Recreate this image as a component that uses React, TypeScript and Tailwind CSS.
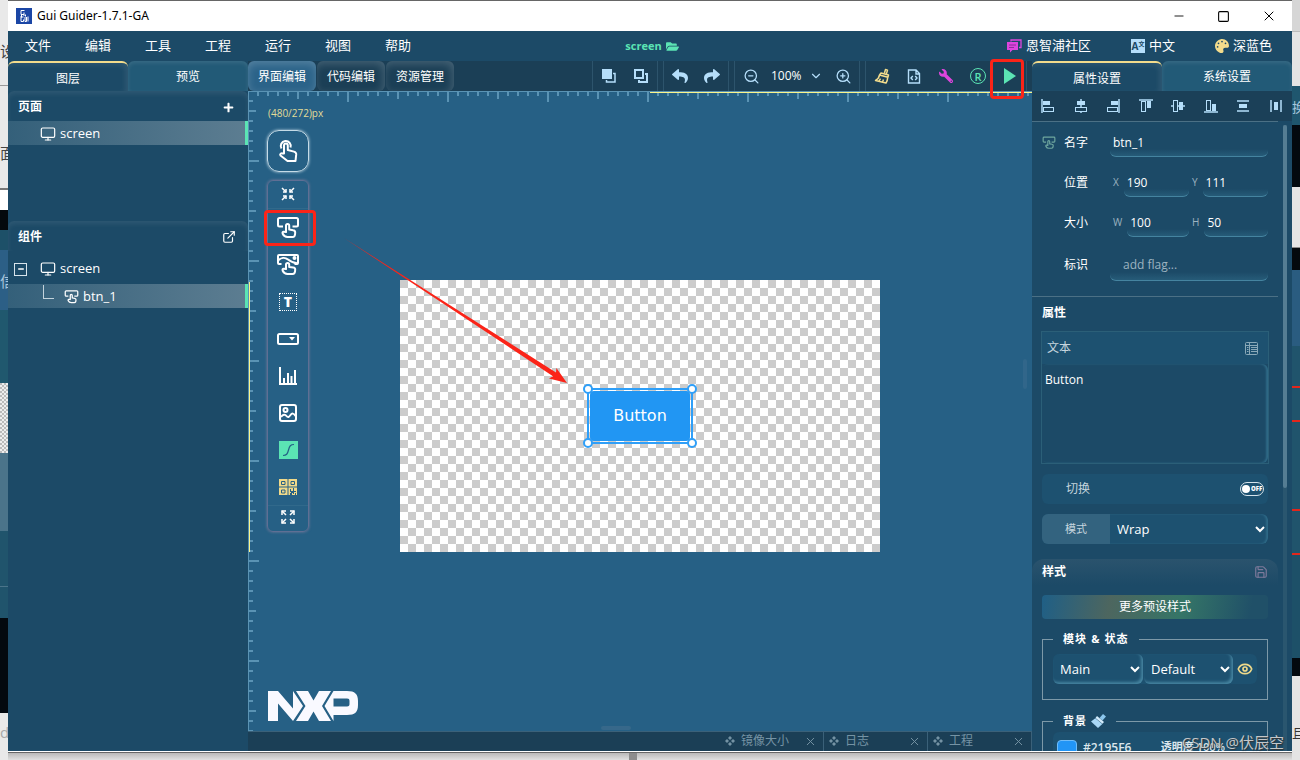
import React from "react";
import {
  FaFolderOpen,
  FaPalette,
  FaPlus,
  FaReply,
  FaShare,
  FaWrench,
} from "react-icons/fa";
import {
  ChevronDown,
  ExternalLink,
  Eye,
  Minus,
  Monitor,
  Save,
  Square,
  X,
  ZoomIn,
  ZoomOut,
} from "lucide-react";

const menuItems = ["文件", "编辑", "工具", "工程", "运行", "视图", "帮助"];
const editorTabs = ["界面编辑", "代码编辑", "资源管理"];
const dockTabs = ["镜像大小", "日志", "工程"];

type IconProps = { className?: string };

/* ---------- icons ---------- */

const AppIcon: React.FC = () => (
  <svg viewBox="0 0 16 16" className="w-4 h-4">
    <rect width="16" height="16" fill="#1b46a5" />
    <path
      d="M8.5 2.5H5v4h3M8 4.5v3.5M4.5 8.5l1 .8M5.5 7v2M7.5 9H5v4.5h2.5v-2M9 9v4.5h1.5V9M9.5 6.5v2M12 8.5v5"
      fill="none"
      stroke="#fff"
    />
  </svg>
);

const TouchIcon: React.FC<IconProps> = ({ className }) => (
  <svg viewBox="0 0 24 24" className={className} fill="none" stroke="currentColor" strokeWidth="2" strokeLinejoin="round">
    <path d="M5.500 9.500a5 5 0 1 1 9-1" />
    <path d="M8 14.500V6.500a1.900 1.900 0 0 1 3.800 0V11l6.200 1.600c1.500.4 2.300 1.300 2.200 2.800l-.7 6.600H11.500l-7-5.500c-1-1.200.8-2.800 2-2z" />
  </svg>
);

const ButtonWidgetIcon: React.FC<IconProps> = ({ className }) => (
  <svg viewBox="0 0 24 22" className={className} fill="none" stroke="currentColor" strokeWidth="2" strokeLinejoin="round">
    <path d="M7 9.500H3.500A1.500 1.500 0 0 1 2 8V2.500A1.500 1.500 0 0 1 3.500 1h17A1.500 1.500 0 0 1 22 2.500V8a1.500 1.500 0 0 1-1.500 1.500H16.500" />
    <path d="M10 15V8.500a1.600 1.600 0 0 1 3.200 0V12.500l4 .7c1.400.2 2 1 2 2.200 0 3-.8 4.600-2.700 4.600H11.500c-2.200 0-4-1.600-4.800-3.200-.5-1.200 0-2.200 1.100-2.100z" />
  </svg>
);

const ImageButtonIcon: React.FC<IconProps> = ({ className }) => (
  <svg viewBox="0 0 24 22" className={className} fill="none" stroke="currentColor" strokeWidth="2" strokeLinejoin="round">
    <path d="M5.500 10H3a1 1 0 0 1-1-1V2a1 1 0 0 1 1-1h18a1 1 0 0 1 1 1v7a1 1 0 0 1-1 1h-2.500" />
    <path d="M2 6.500c3-3 7-3.500 10-1s6 3.500 10 4" />
    <circle cx="18.500" cy="4" r="1" />
    <path d="M10 15v-4.500a1.600 1.600 0 0 1 3.200 0v2.500l4 .5c1.400.2 2 .9 2 2 0 3-.8 4.500-2.700 4.500H11.500c-2.200 0-4-1.600-4.800-3.200-.5-1.200 0-2.200 1.100-2.100z" />
  </svg>
);

const LabelIcon: React.FC = () => (
  <span className="flex items-center justify-center w-[18px] h-[18px] border border-dotted border-white text-sm font-extrabold leading-none text-white">
    T
  </span>
);

const DropdownIcon: React.FC = () => (
  <svg viewBox="0 0 22 12" className="w-[22px] h-3">
    <rect x="1" y="1" width="20" height="10" rx="1.500" fill="none" stroke="#fff" strokeWidth="2" />
    <path d="M12 4h6l-3 3.500z" fill="#fff" />
  </svg>
);

const ChartIcon: React.FC = () => (
  <svg viewBox="0 0 18 18" className="w-[18px] h-[18px]" fill="none" stroke="#fff" strokeWidth="2">
    <path d="M1 0v17h17" />
    <path d="M5 17v-6M9 17V6M12.500 17V9M16 17V3" />
  </svg>
);

const PictureIcon: React.FC = () => (
  <svg viewBox="0 0 18 18" className="w-[18px] h-[18px]" fill="none" stroke="#fff" strokeWidth="2">
    <rect x="1" y="1" width="16" height="16" rx="2" />
    <circle cx="6.500" cy="6" r="2" />
    <path d="M2 13c2-2.500 4-3 5.500-1s2.500 1 4-1 3-2 5 1" />
  </svg>
);

const CurveIcon: React.FC = () => (
  <svg viewBox="0 0 19 18" className="w-[19px] h-[18px]">
    <rect width="19" height="18" fill="#5be4b4" />
    <path d="M4 14.500c3.500 0 4.500-1.500 5.500-5.500s2-5.500 5.500-5.500" fill="none" stroke="#266085" strokeWidth="1.200" />
  </svg>
);

const QrIcon: React.FC = () => (
  <svg viewBox="0 0 18 18" className="w-[18px] h-[18px]">
    <path d="M0 1h8.500v7.500H0zM9.500 1H18v7.500H9.500zM0 9.500h8.500V17H0zM9.500 9.500H18V17H9.500z" fill="#efd98a" />
    <path d="M2.500 3.500h3.500v3H2.500zM12 3.500h3.500v3H12zM2.500 12h3.500v3H2.500z" fill="none" stroke="#266085" />
    <path d="M11 11h1v2h2v-3h1v3h2v1h-2v2h-1v-1h-1v2h-2v-2h1v-1h-1zM16 15h1v2h-1z" fill="#266085" />
  </svg>
);

const CollapseIcon: React.FC = () => (
  <svg viewBox="0 0 14 14" className="w-3.5 h-3.5" fill="none" stroke="#fff" strokeWidth="1.500">
    <path d="M1 1l4 4M13 1L9 5M1 13l4-4M13 13L9 9" />
    <path d="M2 5h3V2M12 5H9V2M2 9h3v3M12 9H9v3" />
  </svg>
);

const ExpandIcon: React.FC = () => (
  <svg viewBox="0 0 14 14" className="w-3.5 h-3.5" fill="none" stroke="#fff" strokeWidth="1.500">
    <path d="M1 1l4 4M13 1L9 5M1 13l4-4M13 13L9 9" />
    <path d="M1 5V1h4M9 1h4v4M1 9v4h4M13 9v4H9" />
  </svg>
);

const BringFrontIcon: React.FC = () => (
  <svg viewBox="0 0 14 14" className="w-3.5 h-3.5">
    <rect width="10" height="10" fill="#b5defa" />
    <path d="M11 4.500h2V13H4.500v-2" fill="none" stroke="#b5defa" strokeWidth="1.500" />
  </svg>
);

const SendBackIcon: React.FC = () => (
  <svg viewBox="0 0 14 14" className="w-3.5 h-3.5" fill="none" stroke="#b5defa" strokeWidth="2">
    <rect x="1" y="1" width="8" height="8" />
    <path d="M11 5h2v8H5v-2" />
  </svg>
);

const BroomIcon: React.FC = () => (
  <svg viewBox="0 0 16 16" className="w-4 h-4" fill="none" stroke="#f3dc8c" strokeWidth="1.500" strokeLinejoin="round">
    <path d="M10.500 5l1-3.500 2 .6-1 3.500M7 5l7.500 2-.6 2.200L5.500 7zM5.500 7.200C5 10 3.500 11.500 1.500 12.500l10.500 2.500c1-1.500 1.600-3.500 1.700-5.600M5 13.200l1.500-2.500M8.500 14l1-2.500" />
  </svg>
);

const CodeFileIcon: React.FC = () => (
  <svg viewBox="0 0 14 15" className="w-3.5 h-[15px]" fill="none" stroke="#b5defa" strokeWidth="1.400">
    <path d="M1.500 1H9l3.500 3.500V14h-11zM9 1v4h3.500" />
    <path d="M5.800 7L4 9l1.800 2M8.200 7L10 9l-1.800 2" />
  </svg>
);

const RegisteredIcon: React.FC = () => (
  <span className="flex items-center justify-center w-4 h-4 border border-[#5be4b4] rounded-full text-[11px] font-semibold leading-none text-[#5be4b4]">
    R
  </span>
);

const ChatIcon: React.FC = () => (
  <svg viewBox="0 0 16 14" className="w-4 h-3.5">
    <path d="M5 2.500V1h10v7.500h-2" fill="none" stroke="#dd45dd" strokeWidth="1.300" />
    <path d="M1 3h11v8H6.500L4 13.500V11H1z" fill="#dd45dd" />
    <path d="M3 6h7M3 8.500h5" stroke="#8a2f9a" />
  </svg>
);

const LanguageIcon: React.FC = () => (
  <span className="flex items-center justify-center w-3.5 h-3.5 bg-[#b5defa] text-[10px] font-bold leading-none text-[#1c4a67]">
    A<span className="text-[6px] -mt-1">文</span>
  </span>
);

const BrushIcon: React.FC = () => (
  <svg viewBox="0 0 15 14" className="w-[15px] h-3.5">
    <path d="M12 0l3 2.500-3.500 4L8.500 4z" fill="#8cc6ec" />
    <path d="M6 2l7 6-1.500 1.800L4.500 4z" fill="#d3ecfc" />
    <path d="M4.300 4.200l7 5.800L7 14 0 7.500z" fill="#a9d8f7" />
  </svg>
);

const TableIcon: React.FC = () => (
  <svg viewBox="0 0 13 13" className="w-[13px] h-[13px]" fill="none" stroke="#8aa9b8">
    <rect x=".5" y=".5" width="12" height="12" rx="1" />
    <path d="M1 3.500h11M4.500 1v11M6 5.500h6M6 7.500h6M6 9.500h6M2 5.500h1.500M2 7.500h1.500M2 9.500h1.500" />
  </svg>
);

const DiamondsIcon: React.FC = () => (
  <svg viewBox="0 0 10 10" className="w-2.5 h-2.5" fill="currentColor">
    <path d="M5 0l2 2-2 2-2-2zM5 6l2 2-2 2-2-2zM2 3l2 2-2 2-2-2zM8 3l2 2-2 2-2-2z" />
  </svg>
);

const NxpLogo: React.FC = () => (
  <svg viewBox="0 0 90 30" className="w-[90px] h-[30px]" fill="#f9f9ff">
    <path d="M0 0h10l15 17.500V0l10 15-10 15L10 12.500V30H0z" />
    <path d="M28 0h12l5.500 9.500L51 0h12L54 15l9 15H51l-5.500-9.500L40 30H28l9.500-15z" />
    <path fillRule="evenodd" d="M65.500 0H79c8 0 11 3 11 10v4c0 7-3 10-11 10H65.500v6L56.500 15zM65.500 7.500v8H79c2 0 2.500-1 2.500-2.500v-3c0-1.700-.6-2.500-2.500-2.500z" />
  </svg>
);

/* each glyph is a guide line plus a filled and a hollow bar */
const alignIcons = [
  { name: "左对齐", d: "M1 0v14", solid: [2, 2, 7, 4], open: [2.5, 8.5, 10, 4] },
  { name: "水平居中", d: "M7 0v14", solid: [3, 2, 8, 4], open: [1.5, 8.5, 11, 4] },
  { name: "右对齐", d: "M13 0v14", solid: [5, 2, 7, 4], open: [1.5, 8.5, 10, 4] },
  { name: "顶对齐", d: "M0 1h14", solid: [8, 2, 4, 7], open: [2.5, 2.5, 4, 10] },
  { name: "垂直居中", d: "M0 7h14", solid: [8, 3, 4, 8], open: [2.5, 1.5, 4, 11] },
  { name: "底对齐", d: "M0 13h14", solid: [8, 5, 4, 7], open: [2.5, 1.5, 4, 10] },
  { name: "垂直分布", d: "M1 2h12M1 12h12", solid: [3, 5, 8, 4] },
  { name: "水平分布", d: "M2 1v12M12 1v12", solid: [5, 3, 4, 8] },
];

/* ---------- title and menu ---------- */

const TitleBar: React.FC = () => (
  <header className="flex items-center h-[30px] pl-2 bg-white text-black shrink-0">
    <AppIcon />
    <h1 className="ml-[5px] [font-family:'Noto_Sans',sans-serif] text-xs">Gui Guider-1.7.1-GA</h1>
    <div className="flex ml-auto">
      <button aria-label="最小化" className="flex items-center justify-center w-[45px] h-[30px]">
        <Minus size={14} strokeWidth={1.5} />
      </button>
      <button aria-label="最大化" className="flex items-center justify-center w-[45px] h-[30px]">
        <Square size={13} strokeWidth={2} strokeLinejoin="miter" />
      </button>
      <button aria-label="关闭" className="flex items-center justify-center w-[46px] h-[30px]">
        <X size={16} strokeWidth={1.5} />
      </button>
    </div>
  </header>
);

const MenuBar: React.FC = () => (
  <div className="grid grid-cols-[1fr_auto_1fr] items-center h-[30px] text-[13px] shrink-0">
    <nav className="flex">
      {menuItems.map((item) => (
        <button key={item} className="w-[60px] h-[30px]">
          {item}
        </button>
      ))}
    </nav>
    <div className="flex items-center gap-1 pl-1 text-[11px] font-bold text-[#5be4b4]">
      screen
      <FaFolderOpen size={13} />
    </div>
    <div className="flex items-center justify-end gap-10 pr-5">
      <a href="#" className="flex items-center gap-1">
        <ChatIcon />
        恩智浦社区
      </a>
      <button className="flex items-center gap-1">
        <LanguageIcon />
        中文
      </button>
      <button className="flex items-center gap-1">
        <FaPalette size={14} className="text-[#f3dc8c]" />
        深蓝色
      </button>
    </div>
  </div>
);

const PanelTabs: React.FC<{ tabs: string[] }> = ({ tabs }) => (
  <div className="flex h-[30px] text-xs shrink-0">
    <button className="flex-1 pt-1 border-t-2 border-[#f3dc8c] rounded-t-md shadow-[inset_-3px_2px_5px_#ffffff14]">
      {tabs[0]}
    </button>
    <button className="flex-1 pt-0.5 rounded-t-md bg-[#225a77] shadow-[inset_0_2px_4px_#ffffff1a]">{tabs[1]}</button>
  </div>
);

/* ---------- left side ---------- */

const LayersPanel: React.FC = () => (
  <aside className="flex flex-col w-60 shrink-0">
    <PanelTabs tabs={["图层", "预览"]} />
    <section className="h-[130px]">
      <div className="flex items-center justify-between h-[30px] pt-0.5 px-2.5 rounded-t-md shadow-[inset_0_3px_5px_#ffffff14]">
        <h2 className="text-xs font-bold">页面</h2>
        <button aria-label="添加页面" className="mr-1">
          <FaPlus size={11} />
        </button>
      </div>
      <div className="flex items-center h-6 gap-1 pt-px pl-8 border-r-3 border-[#5be4b4] bg-linear-to-r from-[#34607a] to-[#5c7d91] text-[13px]">
        <Monitor size={16} strokeWidth={1.8} />
        screen
      </div>
    </section>
    <section>
      <div className="flex items-center justify-between h-[30px] pt-0.5 px-2.5 rounded-t-md shadow-[inset_0_3px_5px_#ffffff14]">
        <h2 className="text-xs font-bold">组件</h2>
        <button aria-label="弹出" className="mr-0.5">
          <ExternalLink size={14} />
        </button>
      </div>
      <div className="flex items-center h-6 mt-1.5 pl-1.5 text-[13px]">
        <button aria-label="折叠" className="flex items-center justify-center w-[13px] h-[13px] border border-[#d7e4ec]">
          <Minus size={8} strokeWidth={4} />
        </button>
        <Monitor size={16} strokeWidth={1.8} className="ml-[13px] mr-1" />
        screen
      </div>
      <div className="flex items-center h-6 gap-1 mt-[3px] pt-px pl-[35px] border-r-3 border-[#5be4b4] bg-linear-to-r from-[#34607a] to-[#5c7d91] text-[13px]">
        <span className="self-start w-[11px] h-3.5 mr-1.5 border-l border-b border-[#c3d3dc]" />
        <ButtonWidgetIcon className="w-[15px] h-3.5" />
        btn_1
      </div>
    </section>
  </aside>
);

/* ---------- center ---------- */

const ToolButton: React.FC<{ label: string; children: React.ReactNode }> = ({ label, children }) => (
  <button aria-label={label} className="relative flex items-center justify-center w-8 h-[30px]">
    {children}
  </button>
);

const EditorToolbar: React.FC = () => (
  <div className="flex h-[30px] pr-[5px] bg-[#1b3f56] text-xs shrink-0">
    <div className="flex gap-px">
      {editorTabs.map((tab, i) => (
        <button
          key={tab}
          className={
            i === 0
              ? "w-[68px] pt-0.5 rounded-md bg-[#2b6389] shadow-[inset_0_3px_8px_#ffffff33]"
              : "w-[68px] pt-0.5 rounded-md shadow-[inset_-2px_3px_8px_#ffffff2e]"
          }
        >
          {tab}
        </button>
      ))}
    </div>
    <div className="flex ml-auto gap-[5px] text-[#b5defa]">
      <div className="flex border-x border-[#2d546c]">
        <ToolButton label="置于顶层"><BringFrontIcon /></ToolButton>
        <ToolButton label="置于底层"><SendBackIcon /></ToolButton>
      </div>
      <div className="flex border-x border-[#2d546c]">
        <ToolButton label="撤销"><FaReply size={16} /></ToolButton>
        <ToolButton label="重做"><FaShare size={16} /></ToolButton>
      </div>
      <div className="flex border-x border-[#2d546c]">
        <ToolButton label="缩小"><ZoomOut size={17} strokeWidth={1.8} /></ToolButton>
        <button className="flex items-center justify-between w-[60px] px-1 text-white">
          100%
          <ChevronDown size={14} className="text-[#b5defa]" />
        </button>
        <ToolButton label="放大"><ZoomIn size={17} strokeWidth={1.8} /></ToolButton>
      </div>
      <div className="flex border-x border-[#2d546c]">
        <ToolButton label="清理"><BroomIcon /></ToolButton>
        <ToolButton label="生成代码"><CodeFileIcon /></ToolButton>
        <ToolButton label="构建"><FaWrench size={14} className="-scale-x-100 text-[#dd45dd]" /></ToolButton>
        <ToolButton label="注册"><RegisteredIcon /></ToolButton>
        <ToolButton label="运行模拟器">
          <svg viewBox="0 0 12 16" className="w-3 h-4" fill="#5be4b4">
            <path d="M0 0l12 8-12 8z" />
          </svg>
          <span className="absolute z-10 -left-1 -top-0.5 w-[34px] h-10 border-3 border-[#fb2418] rounded-sm" />
        </ToolButton>
      </div>
    </div>
  </div>
);

const Rulers: React.FC = () => (
  <>
    <div className="absolute inset-x-0 top-0 h-2.5 border-t border-[#5a93b4]">
      <div className="absolute inset-x-0 top-0 h-1 bg-[linear-gradient(90deg,#5a93b4_2px,transparent_2px)] bg-[length:10px_100%] bg-[position:9px_0]" />
      <div className="absolute inset-x-0 top-0 h-[7px] bg-[linear-gradient(90deg,#5a93b4_2px,transparent_2px)] bg-[length:50px_100%] bg-[position:49px_0]" />
      <div className="absolute inset-x-0 top-0 h-2.5 bg-[linear-gradient(90deg,#5a93b4_2px,transparent_2px)] bg-[length:100px_100%] bg-[position:99px_0]" />
      <div className="absolute top-0 right-0 left-[402px] h-px bg-[#fbf58a]" />
    </div>
    <div className="absolute inset-y-0 left-0 w-2.5 border-l border-[#5a93b4]">
      <div className="absolute inset-y-0 left-0 w-1 bg-[linear-gradient(180deg,#5a93b4_2px,transparent_2px)] bg-[length:100%_10px] bg-[position:0_9px]" />
      <div className="absolute inset-y-0 left-0 w-[7px] bg-[linear-gradient(180deg,#5a93b4_2px,transparent_2px)] bg-[length:100%_50px] bg-[position:0_19px]" />
      <div className="absolute inset-y-0 left-0 w-2.5 bg-[linear-gradient(180deg,#5a93b4_2px,transparent_2px)] bg-[length:100%_100px] bg-[position:0_69px]" />
      <div className="absolute left-0 top-[191px] w-px h-[270px] bg-[#fbf58a]" />
    </div>
  </>
);

const widgets = [
  { name: "按钮", icon: <ButtonWidgetIcon className="w-6 h-[22px]" />, marked: true },
  { name: "图片按钮", icon: <ImageButtonIcon className="w-6 h-[22px]" /> },
  { name: "标签", icon: <LabelIcon /> },
  { name: "下拉框", icon: <DropdownIcon /> },
  { name: "图表", icon: <ChartIcon /> },
  { name: "图像", icon: <PictureIcon /> },
  { name: "曲线", icon: <CurveIcon /> },
  { name: "二维码", icon: <QrIcon /> },
];

const WidgetPalette: React.FC = () => (
  <div className="absolute left-[19px] top-[39px] flex flex-col w-[42px] gap-2 text-white">
    <button
      aria-label="选择"
      className="flex items-center justify-center h-[42px] border border-[#c5dbe7] rounded-xl shadow-[0_0_3px_#c5dbe7]"
    >
      <TouchIcon className="w-6 h-6" />
    </button>
    <div className="flex flex-col border border-[#5f6f94] rounded-md shadow-[0_0_3px_#7c7c9c]">
      <button aria-label="收起" className="flex items-center justify-center h-7 pb-0.5 border-b border-[#31698b]">
        <CollapseIcon />
      </button>
      {widgets.map((w) => (
        <button key={w.name} aria-label={w.name} className="relative flex items-center justify-center h-[37px]">
          {w.icon}
          {w.marked && (
            <span className="absolute -left-1 top-px w-[52px] h-9 border-3 border-[#fb2418] rounded-sm" />
          )}
        </button>
      ))}
      <button aria-label="展开" className="flex items-center justify-center h-[26px] pb-1 border-t border-[#31698b]">
        <ExpandIcon />
      </button>
    </div>
  </div>
);

const handleClasses = [
  "-left-1.5 -top-1.5",
  "-right-1.5 -top-1.5",
  "-left-1.5 -bottom-1.5",
  "-right-1.5 -bottom-1.5",
];

const Artboard: React.FC = () => (
  <div className="relative w-[480px] h-[272px] bg-[conic-gradient(#fff_25%,#ccc_0_50%,#fff_0_75%,#ccc_0)] bg-[length:16px_16px]">
    <div className="absolute left-[187px] top-[108px] w-[106px] h-14 p-px border-2 border-[#2f9ff8]">
      <button className="w-full h-full [font-family:'DejaVu_Sans',sans-serif] text-base text-white bg-[#2196f3] rounded-sm">
        Button
      </button>
      {handleClasses.map((pos) => (
        <span key={pos} className={"absolute w-2.5 h-2.5 bg-white border-2 border-[#2f9ff8] rounded-full " + pos} />
      ))}
    </div>
  </div>
);

const Editor: React.FC = () => (
  <main className="flex flex-col flex-1 min-w-0">
    <EditorToolbar />
    <div className="relative flex items-center justify-center flex-1 pt-2.5 bg-[#266085]">
      <Rulers />
      <span className="absolute left-5 top-4 text-[10px] leading-3 text-[#e2dc97]">(480/272)px</span>
      <Artboard />
      <WidgetPalette />
      <svg viewBox="0 0 226 148" className="absolute left-[95px] top-[146px] w-[226px] h-[148px]" fill="#fb2418">
        <path d="M1 1l212 134.500.400-4.500L224 146l-18-4.500 4-2.300z" />
      </svg>
      <div className="absolute left-5 bottom-2.5">
        <NxpLogo />
      </div>
      <span className="absolute right-[5px] top-[268px] w-1 h-[30px] bg-[#31668a] rounded-sm" />
      <span className="absolute left-[353px] bottom-px w-[30px] h-1 bg-[#37688a] rounded-sm" />
    </div>
    <div className="flex justify-end h-5 border-t border-[#3b6179] bg-[#1b3f56] text-xs leading-4 text-[#7593a4] shrink-0">
      {dockTabs.map((tab) => (
        <div key={tab} className="flex items-center w-[104px] pb-px pl-[5px] pr-1.5 border-r border-[#3b6179]">
          <DiamondsIcon />
          <span className="ml-1.5">{tab}</span>
          <button aria-label="关闭" className="ml-auto">
            <X size={13} strokeWidth={1.8} />
          </button>
        </div>
      ))}
    </div>
  </main>
);

/* ---------- right side ---------- */

const fieldClass =
  "flex-1 min-w-0 px-[3px] border-b border-[#4584a0] rounded-b-md bg-linear-to-b from-transparent from-75% to-[#265b78] placeholder-[#9db3c0]";

const CoordField: React.FC<{ label: string; value: string }> = ({ label, value }) => (
  <label className="flex items-center flex-1 min-w-0 gap-[5px]">
    <span className="text-[10px] text-[#9db3c0]">{label}</span>
    <input defaultValue={value} className={fieldClass + " h-[29px]"} />
  </label>
);

const PropertiesForm: React.FC = () => (
  <div className="flex flex-col gap-[11px] pt-1.5 pb-[15px] pl-2.5 pr-6 mr-3.5 border-b border-[#4b7085] text-xs">
    <div className="flex items-center -mr-3.5">
      <ButtonWidgetIcon className="w-3.5 h-3.5 mr-2 text-[#6fa79f]" />
      <label htmlFor="name" className="w-[46px]">名字</label>
      <input id="name" defaultValue="btn_1" className={fieldClass + " h-[29px]"} />
    </div>
    <div className="flex items-center -mr-3.5 pl-[22px]">
      <span className="w-[49px]">位置</span>
      <div className="flex flex-1 min-w-0 gap-[3px]">
        <CoordField label="X" value="190" />
        <CoordField label="Y" value="111" />
      </div>
    </div>
    <div className="flex items-center -mr-3.5 pl-[22px]">
      <span className="w-[49px]">大小</span>
      <div className="flex flex-1 min-w-0 gap-[3px]">
        <CoordField label="W" value="100" />
        <CoordField label="H" value="50" />
      </div>
    </div>
    <div className="flex items-center -mr-3.5 pl-[22px]">
      <label htmlFor="flag" className="w-[46px]">标识</label>
      <input id="flag" placeholder="add flag..." className={fieldClass + " h-[33px] indent-2.5"} />
    </div>
  </div>
);

const PropertiesPanel: React.FC = () => (
  <aside className="flex flex-col w-[260px] min-h-0 shrink-0">
    <PanelTabs tabs={["属性设置", "系统设置"]} />
    <div className="flex h-[30px] bg-[#1b4058] text-[#b5defa] shrink-0">
      {alignIcons.map((icon) => (
        <button key={icon.name} aria-label={icon.name} className="flex items-center justify-center flex-1">
          <svg viewBox="0 0 14 14" className="w-3.5 h-3.5" fill="none" stroke="currentColor">
            <path d={icon.d} strokeWidth="1.500" />
            <rect x={icon.solid[0]} y={icon.solid[1]} width={icon.solid[2]} height={icon.solid[3]} fill="currentColor" stroke="none" />
            {icon.open && (
              <rect x={icon.open[0]} y={icon.open[1]} width={icon.open[2]} height={icon.open[3]} fill="#1b4058" />
            )}
          </svg>
        </button>
      ))}
    </div>
    <div className="relative flex-1 min-h-0 overflow-hidden">
      <div className="mr-3.5 border-t border-[#4b7085]" />
      <PropertiesForm />
      <section className="pl-2.5 pr-6 text-xs">
        <h2 className="h-[34px] pt-2 font-bold">属性</h2>
        <div className="-ml-px -mr-px border border-[#2b5f78]">
          <div className="flex items-center justify-between h-8 pl-[5px] pr-2.5 bg-[#1d5170] text-[#c5d5de]">
            <label htmlFor="text">文本</label>
            <TableIcon />
          </div>
          <textarea
            id="text"
            defaultValue="Button"
            className="block w-full h-[99px] px-[3px] py-2 resize-none rounded-md shadow-[inset_-2px_0_2px_#2f6a87]"
          />
        </div>
        <label className="flex items-center justify-between h-[30px] mt-2.5 pl-6 pr-1 rounded-md bg-[#1d5170] text-[#c5d5de]">
          切换
          <input
            type="checkbox"
            className="appearance-none flex items-center w-6 h-3.5 pl-px border border-[#d5e3eb] rounded-full text-white before:content-[''] before:w-2 before:h-2 before:mr-px before:rounded-full before:bg-white before:shrink-0 after:content-['OFF'] after:text-[6px] after:font-extrabold after:leading-none"
          />
        </label>
        <div className="flex h-[30px] mt-2.5 overflow-hidden rounded-md bg-[#1d5170]">
          <label htmlFor="mode" className="flex items-center justify-center w-[68px] text-[11px] bg-[#33637f] text-[#c5d5de]">
            模式
          </label>
          <select id="mode" className="flex-1 pl-[3px] text-[13px] rounded-r-md shadow-[inset_-2px_0_2px_#2f6a87]">
            <option>Wrap</option>
          </select>
        </div>
      </section>
      <section className="mt-[15px] text-xs">
        <div className="flex items-center justify-between h-[26px] mr-3.5 pl-2.5 pr-2.5 rounded-t-xl bg-linear-to-b from-[#2a536d] to-[#1c4a67]">
          <h2 className="font-bold">样式</h2>
          <Save size={14} className="text-[#7e7a9b]" />
        </div>
        <div className="pl-2.5 pr-6">
          <button className="w-full h-6 mt-2.5 rounded-sm bg-[linear-gradient(100deg,#1f5f86,#4d665f_30%,#357567_62%,#205068_92%)]">
            更多预设样式
          </button>
          <fieldset className="h-[67px] mt-3.5 px-2.5 border border-[#7d99a8]">
            <legend className="px-2.5 text-[11px] font-bold leading-3 tracking-widest">模块 &amp; 状态</legend>
            <div className="flex items-center h-[30px] mt-[9px] gap-px rounded-md bg-[#1d5170] text-[13px]">
              <select aria-label="模块" className="w-[90px] h-[30px] pl-[3px] rounded-md shadow-[inset_-2px_-2px_3px_#4584a0]">
                <option>Main</option>
              </select>
              <select aria-label="状态" className="w-[89px] h-[30px] pl-[3px] rounded-md shadow-[inset_-2px_-2px_3px_#4584a0]">
                <option>Default</option>
              </select>
              <button aria-label="显示" className="ml-[3px]">
                <Eye size={16} strokeWidth={2.5} className="text-[#efd98a]" />
              </button>
            </div>
          </fieldset>
          <fieldset className="mt-3.5 px-2.5 border border-[#7d99a8]">
            <legend className="flex items-center gap-1 px-2.5 text-[11px] font-bold leading-3 tracking-widest">
              背景
              <BrushIcon />
            </legend>
            <div className="flex items-start h-[38px] mt-1 pt-2 px-1 gap-1.5 rounded-md bg-[#1d5170] font-semibold text-[#dbe6ec]">
              <input
                type="color"
                aria-label="背景颜色"
                defaultValue="#2195f6"
                className="w-5 h-5 [&::-webkit-color-swatch-wrapper]:p-0 [&::-webkit-color-swatch]:rounded-sm [&::-webkit-color-swatch]:border-[#6fbcf9]"
              />
              #2195F6
              <span className="ml-auto mr-7 text-[11px]">透明度 100%</span>
            </div>
          </fieldset>
        </div>
      </section>
      <div className="absolute inset-y-0 right-[5px] top-1 w-1 bg-[#2a566f]">
        <div className="h-[363px] bg-[#557d93] rounded-full" />
      </div>
    </div>
  </aside>
);

/* ---------- desktop showing behind the window ---------- */

const DesktopLeft: React.FC = () => (
  <div className="flex flex-col w-2 overflow-hidden bg-[#e9e9e9] text-[15px] text-[#444] shrink-0">
    <div className="h-[86px] pt-10 border-b border-[#999]">设</div>
    <div className="h-[104px] border-b-2 border-[#777] pt-14">面</div>
    <div className="h-5 bg-white" />
    <div className="h-5 bg-[#04090d]" />
    <div className="h-5 bg-[#1d5068]" />
    <div className="h-[60px] bg-[#2c5f86] pt-5 text-[#a9c6dc]">信</div>
    <div className="h-[73px] bg-[#20586e]" />
    <div className="h-[70px] bg-[conic-gradient(#eee_25%,#bbb_0_50%,#eee_0_75%,#bbb_0)] bg-[length:4px_4px]" />
    <div className="h-[78px] bg-[#4b748a]" />
    <div className="h-14 bg-[#20546c] border-b border-[#4b748a]" />
    <div className="h-[31px] bg-[#20546c]" />
    <div className="h-[95px] bg-[#03090f]" />
    <div className="flex-1 text-[#aaa] pt-2">d</div>
  </div>
);

const DesktopRight: React.FC = () => (
  <div className="flex flex-col w-2 overflow-hidden bg-[#e4e4e4] text-[13px] text-[#333] shrink-0">
    <div className="h-8 bg-[#d6d6d6] border-b border-[#bbb]" />
    <div className="h-[54px]" />
    <div className="h-[39px] pt-3 bg-[#1f566e] text-[#a9c6dc]">换</div>
    <div className="h-[62px] bg-[#03090f]" />
    <div className="h-[61px] border-b border-[#888]" />
    <div className="h-[22px] bg-[#04090d]" />
    <div className="h-[76px] bg-[#2a5c80]" />
    <div className="h-[42px] bg-[#20546c] border-b-2 border-[#e3261c]" />
    <div className="h-[34px] bg-[#20546c] border-b-2 border-[#e3261c]" />
    <div className="h-[89px] bg-[#20546c] border-b-2 border-[#e3261c]" />
    <div className="h-11 bg-[#20546c] border-b-2 border-[#e3261c]" />
    <div className="h-[103px] bg-[#1d5068]" />
    <div className="h-[18px] bg-[#03090f]" />
    <div className="flex-1 pt-12">且</div>
  </div>
);

const App: React.FC = () => {
  return (
    <div className="relative flex h-screen overflow-hidden bg-[#d6d6d6] [font-family:'Open_Sans','Noto_Sans_CJK_SC',sans-serif] text-white">
      <DesktopLeft />
      <div className="flex flex-col flex-1 min-w-0 border-t border-[#666]">
        <div className="flex flex-col flex-1 min-h-0 border-b border-white bg-[#1c4a67]">
          <TitleBar />
          <MenuBar />
          <div className="flex flex-1 min-h-0">
            <LayersPanel />
            <Editor />
            <PropertiesPanel />
          </div>
        </div>
        <div className="flex h-2 border-t border-[#666] bg-linear-to-b from-[#b9b9b9] to-[#e0e0e0] shrink-0">
          <span className="w-2 ml-[621px] bg-[#8d8d8d]" />
        </div>
      </div>
      <DesktopRight />
      <span className="absolute right-4 bottom-2 text-[15px] leading-5 text-[#c3c7ca] [text-shadow:1px_1px_1px_#333]">
        CSDN @伏辰空
      </span>
    </div>
  );
};

export default App;
